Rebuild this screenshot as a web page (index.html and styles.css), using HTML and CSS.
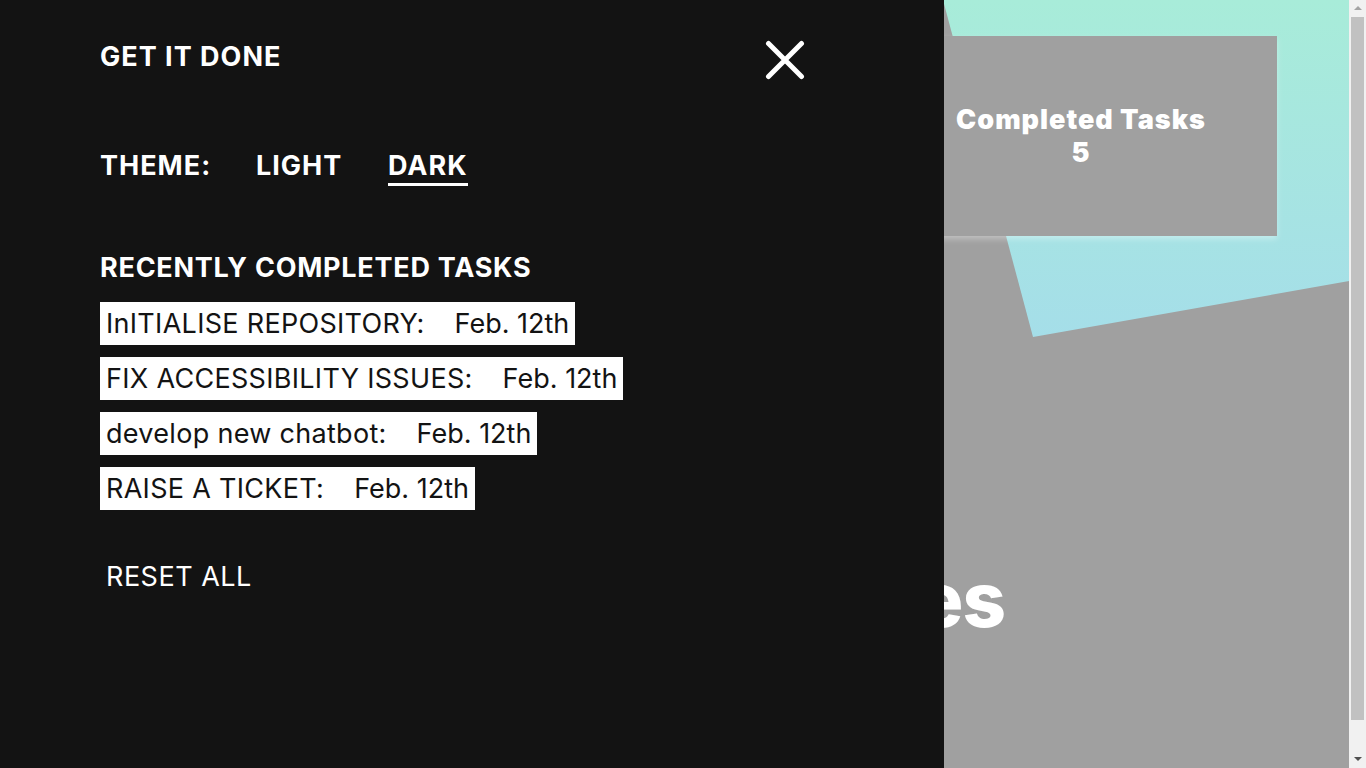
FILE: index.html
```html
<!DOCTYPE html>
<html lang="en">
<head>
<meta charset="utf-8">
<title>Get It Done</title>
<link rel="stylesheet" href="styles.css">
</head>
<body>
<main class="page">
  <div class="deco" aria-hidden="true"></div>
  <section class="stats-card">
    <p class="stats-label">Completed Tasks</p>
    <p class="stats-value">5</p>
  </section>
  <h1 class="hero">Categories</h1>
</main>
<aside class="drawer">
  <header class="drawer-head">
    <h2 class="brand">GET IT DONE</h2>
    <button class="close" aria-label="Close menu">
      <svg viewBox="0 0 40 40" width="40" height="40"><path d="M3.5 3.5 L36.5 36.5 M36.5 3.5 L3.5 36.5" stroke="#fff" stroke-width="5" stroke-linecap="round" fill="none"/></svg>
    </button>
  </header>
  <div class="theme">
    <span class="theme-label">THEME:</span>
    <span><button class="theme-opt">LIGHT</button></span>
    <span><button class="theme-opt active">DARK</button></span>
  </div>
  <h3 class="recent-title">RECENTLY COMPLETED TASKS</h3>
  <ul class="tasks">
    <li class="task"><span class="task-name">InITIALISE REPOSITORY:</span><span class="task-date">Feb. 12th</span></li>
    <li class="task"><span class="task-name">FIX ACCESSIBILITY ISSUES:</span><span class="task-date">Feb. 12th</span></li>
    <li class="task"><span class="task-name">develop new chatbot:</span><span class="task-date">Feb. 12th</span></li>
    <li class="task"><span class="task-name">RAISE A TICKET:</span><span class="task-date">Feb. 12th</span></li>
  </ul>
  <button class="reset">RESET ALL</button>
</aside>
<div class="scrollbar" aria-hidden="true">
  <span class="sb-arrow sb-up"></span>
  <span class="sb-thumb"></span>
  <span class="sb-arrow sb-down"></span>
</div>
</body>
</html>
```
FILE: styles.css
```css
html, body {
  margin: 0;
  padding: 0;
}
body {
  font-family: "Inter", "Noto Sans", sans-serif;
  background: #a0a0a0;
}
.page {
  position: relative;
  height: 810px;
  background: #a0a0a0;
  padding-top: 36px;
  box-sizing: border-box;
  overflow: hidden;
}
.deco {
  position: absolute;
  left: 900px;
  top: 0;
  width: 466px;
  height: 340px;
  background: linear-gradient(180deg, #a8ecd9 0%, #a5dee9 100%);
  clip-path: polygon(43px 0, 466px 0, 466px 278px, 133px 337px);
}
.stats-card {
  position: relative;
  margin: 0 0 0 885px;
  width: 392px;
  height: 200px;
  background: #a0a0a0;
  box-shadow: 0 3px 6px rgba(255, 255, 255, 0.35);
  display: flex;
  flex-direction: column;
  justify-content: center;
  align-items: center;
  color: #fff;
  font-weight: 900;
  font-size: 27px;
  letter-spacing: 1px;
  line-height: 33px;
}
.stats-card p {
  margin: 0;
}
.hero {
  position: relative;
  width: 1005px;
  margin: 318px 0 0 0;
  text-align: right;
  color: #fff;
  font-size: 76px;
  font-weight: 800;
  line-height: 90px;
  letter-spacing: -1px;
}
.drawer {
  position: fixed;
  top: 0;
  left: 0;
  bottom: 0;
  width: 944px;
  background: #131313;
  color: #fff;
  padding: 41px 139px 0 100px;
  box-sizing: border-box;
}
.drawer-head {
  display: flex;
  justify-content: space-between;
  align-items: flex-start;
  height: 40px;
}
.brand {
  margin: 0;
  font-size: 27px;
  font-weight: 700;
  line-height: 32px;
  letter-spacing: 1px;
}
.close {
  background: none;
  border: 0;
  padding: 0;
  width: 40px;
  height: 40px;
  display: block;
  margin-top: -1px;
}
.close svg {
  display: block;
}
.theme {
  margin-top: 69px;
  display: grid;
  grid-template-columns: 156px 132px auto;
  align-items: start;
  height: 32px;
  font-size: 27px;
  font-weight: 700;
  line-height: 32px;
  letter-spacing: 1px;
}
.theme-opt {
  background: none;
  border: 0;
  padding: 0;
  color: #fff;
  font: inherit;
  letter-spacing: inherit;
  line-height: 32px;
  display: inline-block;
}
.theme-opt.active {
  border-bottom: 3px solid #fff;
  padding-bottom: 1px;
}
.recent-title {
  margin: 70px 0 0;
  font-size: 27px;
  font-weight: 700;
  line-height: 32px;
  letter-spacing: 0.75px;
}
.tasks {
  list-style: none;
  margin: 18px 0 0;
  padding: 0;
  display: flex;
  flex-direction: column;
  align-items: flex-start;
  gap: 12px;
}
.task {
  background: #fff;
  color: #131313;
  padding: 0 6px;
  font-size: 27px;
  font-weight: 400;
  line-height: 43px;
  display: flex;
  gap: 30px;
}
.task-name {
  letter-spacing: 0.3px;
}
.reset {
  margin-top: 51px;
  background: none;
  border: 0;
  padding: 0 6px;
  color: #fff;
  font-family: inherit;
  font-size: 27px;
  font-weight: 400;
  line-height: 32px;
  letter-spacing: 0.5px;
}
.scrollbar {
  position: fixed;
  top: 0;
  right: 0;
  width: 17px;
  height: 100vh;
  background: #f1f1f1;
  display: flex;
  flex-direction: column;
  align-items: center;
}
.sb-arrow {
  flex: 0 0 17px;
  width: 0;
  height: 0;
  box-sizing: border-box;
  border-left: 4px solid transparent;
  border-right: 4px solid transparent;
}
.sb-up {
  border-bottom: 4px solid #a3a3a3;
  border-top: 0;
  margin-top: 6px;
  flex-basis: 4px;
  margin-bottom: 7px;
}
.sb-thumb {
  width: 13px;
  flex: 1 1 auto;
  background: #c1c1c1;
  margin-bottom: 37px;
}
.sb-down {
  border-top: 4px solid #505050;
  border-bottom: 0;
  flex-basis: 4px;
  margin-bottom: 7px;
}
```
